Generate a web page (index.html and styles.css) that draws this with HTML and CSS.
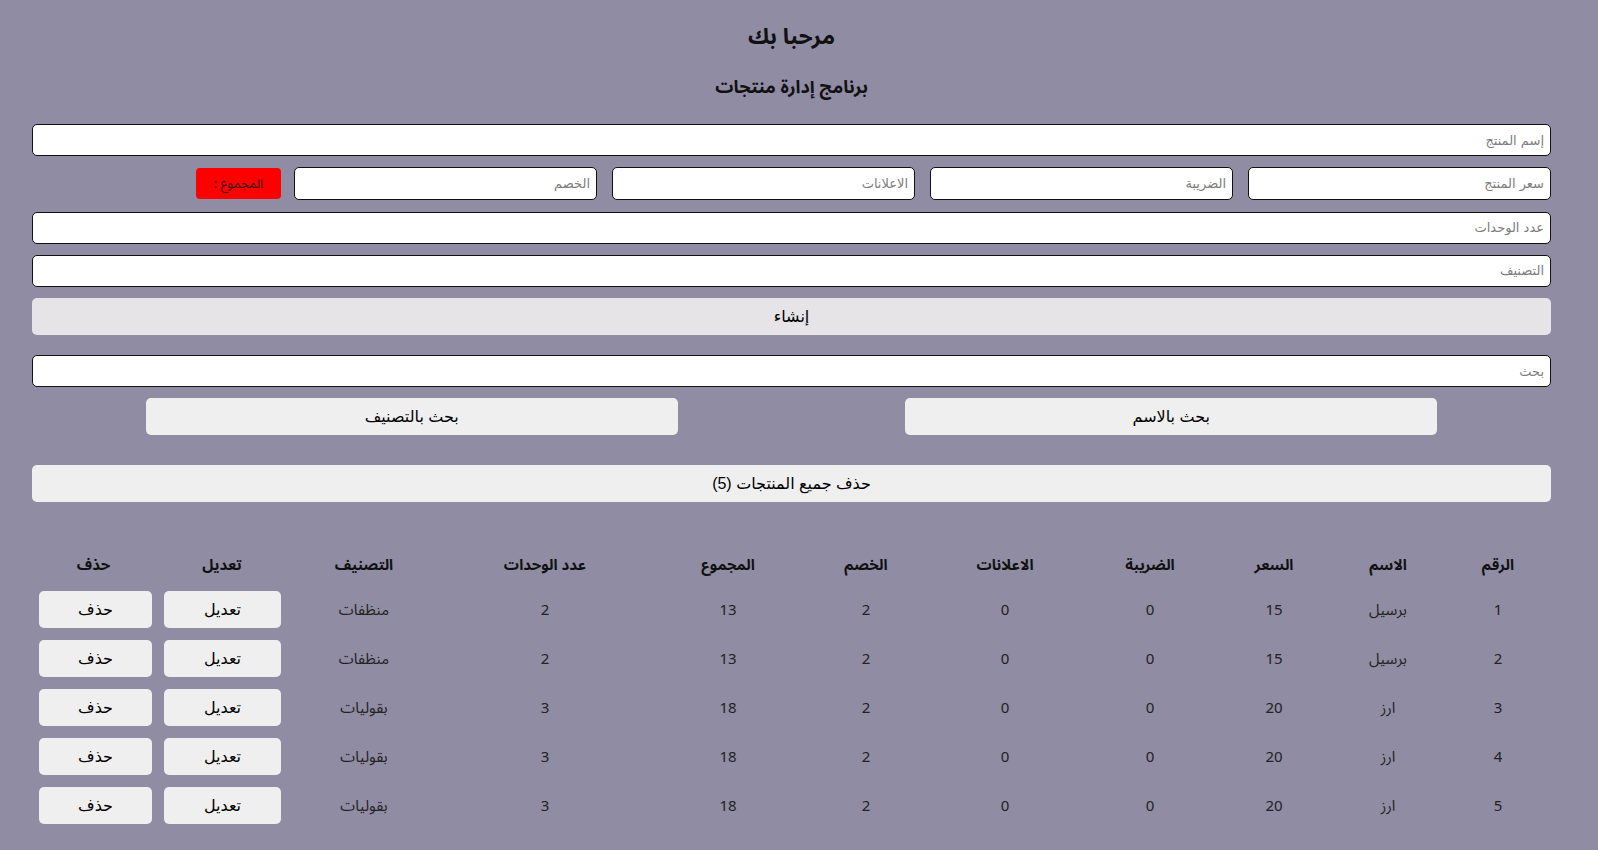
FILE: index.html
```html
<!DOCTYPE html>
<html lang="ar" dir="rtl">
<head>
<meta charset="utf-8">
<title>CRUDS</title>
<link rel="stylesheet" href="styles.css">
</head>
<body>
<div class="crud">
  <div class="head">
    <h2 class="title">مرحبا بك</h2>
    <h3 class="subtitle">برنامج إدارة منتجات</h3>
  </div>
  <div class="inputs">
    <input class="field" type="text" placeholder="إسم المنتج">
    <div class="price">
      <input class="field small" type="number" placeholder="سعر المنتج">
      <input class="field small" type="number" placeholder="الضريبة">
      <input class="field small" type="number" placeholder="الاعلانات">
      <input class="field small" type="number" placeholder="الخصم">
      <small class="total">المجموع :</small>
    </div>
    <input class="field" type="number" placeholder="عدد الوحدات">
    <input class="field" type="text" placeholder="التصنيف">
    <button class="create">إنشاء</button>
  </div>
  <div class="search-block">
    <input class="field search" type="text" placeholder="بحث">
    <div class="btn-search">
      <div class="half"><button class="sbtn">بحث بالاسم</button></div>
      <div class="half"><button class="sbtn">بحث بالتصنيف</button></div>
    </div>
  </div>
  <div class="delete-all"><button class="del-all">حذف جميع المنتجات (5)</button></div>
  <table class="products">
    <colgroup>
      <col class="c1"><col class="c2"><col class="c3"><col class="c4"><col class="c5"><col class="c6"><col class="c7"><col class="c8"><col class="c9"><col class="c10"><col class="c11">
    </colgroup>
    <thead>
      <tr>
        <th>الرقم</th><th>الاسم</th><th>السعر</th><th>الضريبة</th><th>الاعلانات</th><th>الخصم</th><th>المجموع</th><th>عدد الوحدات</th><th>التصنيف</th><th>تعديل</th><th>حذف</th>
      </tr>
    </thead>
    <tbody>
      <tr><td>1</td><td>برسيل</td><td>15</td><td>0</td><td>0</td><td>2</td><td>13</td><td>2</td><td>منظفات</td><td><button class="tbtn edit">تعديل</button></td><td><button class="tbtn del">حذف</button></td></tr>
      <tr><td>2</td><td>برسيل</td><td>15</td><td>0</td><td>0</td><td>2</td><td>13</td><td>2</td><td>منظفات</td><td><button class="tbtn edit">تعديل</button></td><td><button class="tbtn del">حذف</button></td></tr>
      <tr><td>3</td><td>ارز</td><td>20</td><td>0</td><td>0</td><td>2</td><td>18</td><td>3</td><td>بقوليات</td><td><button class="tbtn edit">تعديل</button></td><td><button class="tbtn del">حذف</button></td></tr>
      <tr><td>4</td><td>ارز</td><td>20</td><td>0</td><td>0</td><td>2</td><td>18</td><td>3</td><td>بقوليات</td><td><button class="tbtn edit">تعديل</button></td><td><button class="tbtn del">حذف</button></td></tr>
      <tr><td>5</td><td>ارز</td><td>20</td><td>0</td><td>0</td><td>2</td><td>18</td><td>3</td><td>بقوليات</td><td><button class="tbtn edit">تعديل</button></td><td><button class="tbtn del">حذف</button></td></tr>
    </tbody>
  </table>
</div>
</body>
</html>
```
FILE: styles.css
```css
* { box-sizing: border-box; }
html, body {
  margin: 0;
  padding: 0;
  background: #8f8ca3;
}
body {
  font-family: "Noto Sans Arabic", "Noto Sans", "DejaVu Sans", sans-serif;
  color: #222;
}
.crud {
  padding: 0 47px 0 32px;
}
.head {
  text-align: center;
}
.title {
  margin: 21px 0 0;
  font-size: 22.5px;
  line-height: 32px;
  font-weight: 700;
  color: #111;
}
.subtitle {
  margin: 21px 0 0;
  font-size: 18px;
  line-height: 26px;
  font-weight: 700;
  color: #111;
}
.inputs {
  margin-top: 24px;
  display: flex;
  flex-direction: column;
  gap: 11.33px;
}
.field {
  display: block;
  width: 100%;
  height: 32px;
  border: 1px solid #111;
  border-radius: 5px;
  background: #fff;
  padding: 0 6px;
  font-family: "DejaVu Sans", "Liberation Sans", sans-serif;
  font-size: 13px;
  outline: none;
  direction: rtl;
}
.field::placeholder {
  color: #7d7d7d;
}
.price {
  display: flex;
  align-items: center;
  gap: 15px;
}
.field.small {
  width: 303px;
  height: 33px;
  flex: none;
}
.total {
  display: flex;
  align-items: center;
  justify-content: center;
  width: 85px;
  height: 31px;
  margin-right: -2px;
  background: #ff0000;
  border-radius: 4px;
  font-size: 13px;
  color: #3a1010;
}
.create {
  width: 100%;
  height: 37px;
  border: none;
  border-radius: 5px;
  background: #e6e4e6;
  font-family: "Liberation Sans", "DejaVu Sans", sans-serif;
  font-size: 16px;
  color: #000;
}
.search-block {
  margin-top: 20px;
}
.btn-search {
  margin-top: 11px;
  display: flex;
}
.half {
  flex: 1;
  display: flex;
  justify-content: center;
}
.sbtn, .del-all, .tbtn {
  border: none;
  border-radius: 5px;
  background: #efefef;
  font-family: "Liberation Sans", "DejaVu Sans", sans-serif;
  font-size: 16px;
  color: #000;
}
.sbtn {
  width: 532px;
  height: 37px;
}
.delete-all {
  margin-top: 30px;
}
.del-all {
  width: 100%;
  height: 37px;
}
.products {
  margin-top: 43px;
  width: 100%;
  table-layout: fixed;
  border-collapse: collapse;
  text-align: center;
}
.c1 { width: 106px; }
.c2 { width: 114px; }
.c3 { width: 114px; }
.c4 { width: 134px; }
.c5 { width: 156px; }
.c6 { width: 122px; }
.c7 { width: 154px; }
.c8 { width: 212px; }
.c9 { width: 150px; }
.c10 { width: 134px; }
.c11 { width: 123px; }
.products th {
  height: 40px;
  padding: 0;
  font-size: 15px;
  font-weight: 700;
  color: #111;
}
.products td {
  height: 49px;
  padding: 0;
  font-size: 15px;
  color: #222;
}
.tbtn {
  height: 37px;
  vertical-align: middle;
}
.tbtn.edit { width: 117px; margin-left: 1px; }
.tbtn.del { width: 113px; margin-left: 4px; }
```
